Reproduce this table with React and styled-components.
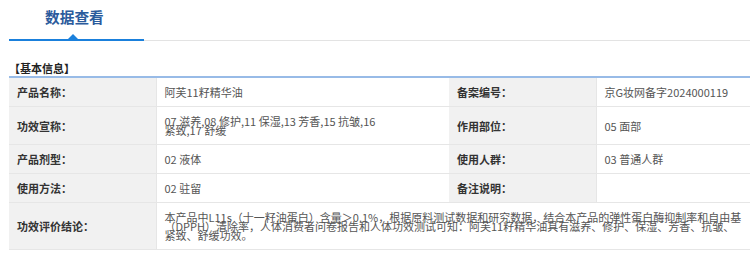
import React from "react";
import styled, { createGlobalStyle } from "styled-components";

const GlobalStyle = createGlobalStyle`
  body {
    margin: 0;
    background: #fff;
    font-family: "Noto Sans CJK SC", "Microsoft YaHei", sans-serif;
  }
`;

const rows = [
  [
    { label: "产品名称：", value: "阿芙11籽精华油" },
    { label: "备案编号：", value: "京G妆网备字2024000119" },
  ],
  [
    {
      label: "功效宣称：",
      value: "07 滋养,08 修护,11 保湿,13 芳香,15 抗皱,16\n紧致,17 舒缓",
    },
    { label: "作用部位：", value: "05 面部" },
  ],
  [
    { label: "产品剂型：", value: "02 液体" },
    { label: "使用人群：", value: "03 普通人群" },
  ],
  [
    { label: "使用方法：", value: "02 驻留" },
    { label: "备注说明：", value: "" },
  ],
];

const conclusion =
  "本产品中L11s（十一籽油蛋白）含量＞0.1%，根据原料测试数据和研究数据，结合本产品的弹性蛋白酶抑制率和自由基（DPPH）清除率，人体消费者问卷报告和人体功效测试可知：阿芙11籽精华油具有滋养、修护、保湿、芳香、抗皱、紧致、舒缓功效。";

export default function App() {
  return (
    <Page>
      <GlobalStyle />
      <TabBar>
        <Tab>数据查看</Tab>
      </TabBar>
      <SectionTitle>【基本信息】</SectionTitle>
      <Table>
        <colgroup>
          <col style={{ width: 147 }} />
          <col style={{ width: 293 }} />
          <col style={{ width: 147 }} />
          <col style={{ width: 154 }} />
        </colgroup>
        <tbody>
          {rows.map((row, i) => (
            <tr key={i}>
              {row.map(cell => (
                <React.Fragment key={cell.label}>
                  <Label>{cell.label}</Label>
                  <Value>{cell.value}</Value>
                </React.Fragment>
              ))}
            </tr>
          ))}
          <tr>
            <Label>功效评价结论：</Label>
            <Value colSpan={3}>{conclusion}</Value>
          </tr>
        </tbody>
      </Table>
    </Page>
  );
}

const Page = styled.div`
  padding: 0 0 0 9px;
  width: 741px;
  overflow: hidden;
`;

const TabBar = styled.div`
  display: flex;
  height: 41px;
  border-bottom: 1px solid #e3e3e3;
  box-sizing: border-box;
`;

const Tab = styled.div`
  position: relative;
  width: 135px;
  box-sizing: border-box;
  padding: 7px 0 0 36px;
  font-size: 14.7px;
  font-weight: bold;
  color: #2b5b9c;
  line-height: 20px;
  border-bottom: 2px solid #1a80dc;
  margin-bottom: -1px;

  &::after {
    content: "";
    position: absolute;
    left: 59px;
    bottom: 0;
    border-left: 5px solid transparent;
    border-right: 5px solid transparent;
    border-bottom: 5px solid #1a80dc;
  }
`;

const SectionTitle = styled.div`
  margin: 19px 0 0;
  font-size: 11px;
  font-weight: bold;
  color: #222;
  line-height: 16px;
`;

const Table = styled.table`
  width: 741px;
  table-layout: fixed;
  border-collapse: collapse;
  border-top: 2px solid #98bbe7;
  font-size: 11px;
`;

const Label = styled.th`
  background: #f1f1f1;
  border: 1px solid #e6e6e6;
  border-left: 0;
  padding: 10px 8px 9px;
  line-height: 9px;
  text-align: left;
  font-weight: bold;
  color: #333;
`;

const Value = styled.td`
  background: #fff;
  border: 1px solid #e6e6e6;
  border-right: 0;
  padding: 10px 8px 9px;
  line-height: 9px;
  color: #555;
  white-space: pre-line;
  vertical-align: middle;
`;
